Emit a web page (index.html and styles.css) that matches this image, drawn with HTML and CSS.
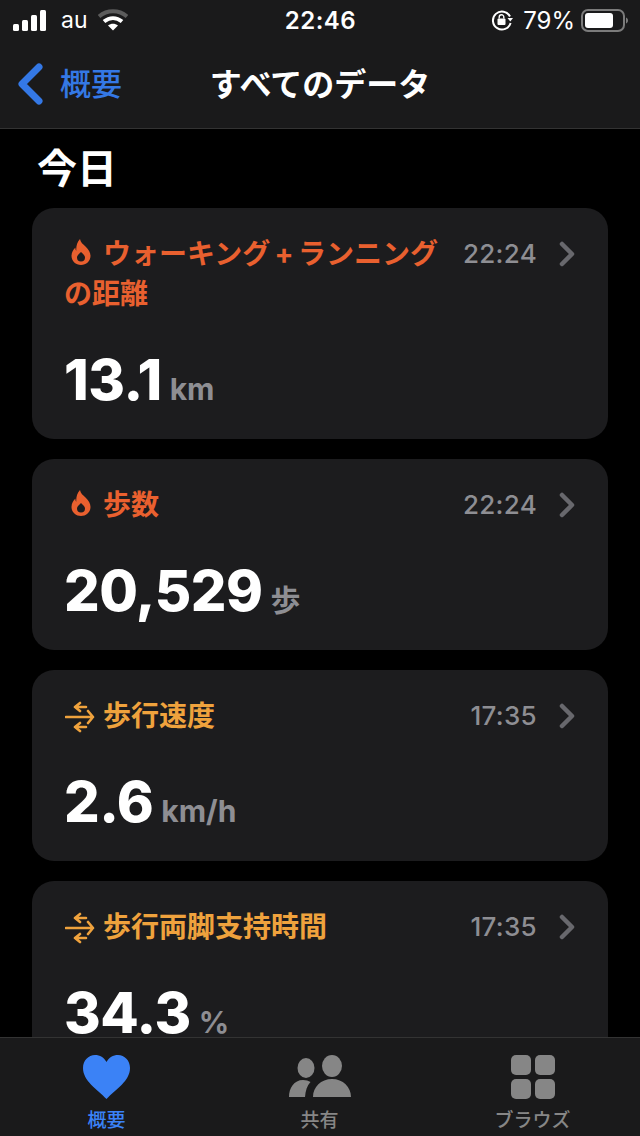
FILE: index.html
```html
<!doctype html>
<html lang="ja">
  <head>
    <meta charset="utf-8">
    <meta name="viewport" content="width=device-width, initial-scale=1">
    <title>すべてのデータ</title>
    <link rel="stylesheet" href="styles.css">
  </head>
  <body>
    <div class="app">
      <header class="top">
        <div class="status">
          <div class="status-left">
            <svg class="signal" width="34" height="21" viewBox="0 0 34 21"><rect x="0" y="14" width="6" height="7" rx="1.500"/><rect x="9" y="10" width="6" height="11" rx="1.500"/><rect x="18" y="5" width="6" height="16" rx="1.500"/><rect x="27" y="0" width="6" height="21" rx="1.500"/></svg>
            <span class="carrier">au</span>
            <svg class="wifi" width="30" height="22" viewBox="0 0 30 22"><path d="M1 7.500C9 .5 21 .5 29 7.500" fill="none" stroke="#5c5c5c" stroke-width="4"/><path d="M6 12.500c5.500-4.500 12.500-4.500 18 0" fill="none" stroke="#fff" stroke-width="4"/><path d="M10 16.500c3-2.400 7-2.400 10 0L15 21.500z" fill="#fff"/></svg>
          </div>
          <span class="clock">22:46</span>
          <div class="status-right">
            <svg class="lock" width="22" height="22" viewBox="0 0 22 22"><path d="M19 7.500A9 9 0 1 0 19.600 14" fill="none" stroke="#fff" stroke-width="2"/><path d="M16.500 9h5.500l-2.700 3.500z" fill="#fff"/><rect x="6.500" y="9.500" width="8" height="6.500" rx="1" fill="#fff"/><path d="M8.200 9.500V8a2.300 2.300 0 0 1 4.600 0v1.500" fill="none" stroke="#fff" stroke-width="1.400"/></svg>
            <span class="percent">79%</span>
            <svg class="battery" width="47" height="23" viewBox="0 0 47 23"><rect x="1" y="1" width="42" height="21" rx="6" fill="none" stroke="#7b7b7b" stroke-width="2"/><rect x="4" y="4" width="28" height="15" rx="3" fill="#fff"/><path d="M45 8.500c1.300.5 2 1.600 2 3s-.7 2.500-2 3z" fill="#7b7b7b"/></svg>
          </div>
        </div>
        <nav class="nav">
          <a class="back">
            <svg width="28" height="42" viewBox="0 0 28 42"><path d="M23 4 6 21l17 17" fill="none" stroke="#3478e5" stroke-width="7" stroke-linecap="round" stroke-linejoin="round"/></svg>
            <span>概要</span>
          </a>
          <h1>すべてのデータ</h1>
        </nav>
      </header>

      <main class="list">
        <h2>今日</h2>

        <section class="card">
          <div class="card-head">
            <h3 class="title red">
              <svg class="flame" width="20" height="26" viewBox="0 0 20 26"><path fill-rule="evenodd" d="M9 0c.5 3.500 3 5 5.500 7.500 3 3 5 6 5 9.500 0 5-4.300 9-9.500 9S.5 22 .5 17c0-4 2-6.500 4-8.500-.2 1.500 0 2.500.8 3.300C5 7.500 6 3 9 0zM10 13c-2 2-4 3.500-4 5.500a4 4 0 0 0 8 0c0-2-2-3.500-4-5.500z"/></svg><span>ウォーキング&#8201;+&#8201;ランニングの距離</span>
            </h3>
            <span class="time">22:24</span>
            <svg class="chevron" width="18" height="26" viewBox="0 0 18 26"><path d="M4 3l10 10L4 23" fill="none" stroke="#68686d" stroke-width="4.500" stroke-linecap="round" stroke-linejoin="round"/></svg>
          </div>
          <p class="value">13.1<small>km</small></p>
        </section>

        <section class="card">
          <div class="card-head">
            <h3 class="title red">
              <svg class="flame" width="20" height="26" viewBox="0 0 20 26"><path fill-rule="evenodd" d="M9 0c.5 3.500 3 5 5.500 7.500 3 3 5 6 5 9.500 0 5-4.300 9-9.500 9S.5 22 .5 17c0-4 2-6.500 4-8.500-.2 1.500 0 2.500.8 3.300C5 7.500 6 3 9 0zM10 13c-2 2-4 3.500-4 5.500a4 4 0 0 0 8 0c0-2-2-3.500-4-5.500z"/></svg><span>歩数</span>
            </h3>
            <span class="time">22:24</span>
            <svg class="chevron" width="18" height="26" viewBox="0 0 18 26"><path d="M4 3l10 10L4 23" fill="none" stroke="#68686d" stroke-width="4.500" stroke-linecap="round" stroke-linejoin="round"/></svg>
          </div>
          <p class="value">20,529<small>歩</small></p>
        </section>

        <section class="card">
          <div class="card-head">
            <h3 class="title orange">
              <svg class="arrows" width="30" height="32" viewBox="0 0 30 32"><path d="M21 6H10M15 2l-5 4 5 4M1 16h27M23 10l5 6-5 6M21 26H10M15 22l-5 4 5 4" fill="none" stroke="currentColor" stroke-width="2.600" stroke-linecap="round" stroke-linejoin="round"/></svg><span>歩行速度</span>
            </h3>
            <span class="time">17:35</span>
            <svg class="chevron" width="18" height="26" viewBox="0 0 18 26"><path d="M4 3l10 10L4 23" fill="none" stroke="#68686d" stroke-width="4.500" stroke-linecap="round" stroke-linejoin="round"/></svg>
          </div>
          <p class="value">2.6<small>km/h</small></p>
        </section>

        <section class="card">
          <div class="card-head">
            <h3 class="title orange">
              <svg class="arrows" width="30" height="32" viewBox="0 0 30 32"><path d="M21 6H10M15 2l-5 4 5 4M1 16h27M23 10l5 6-5 6M21 26H10M15 22l-5 4 5 4" fill="none" stroke="currentColor" stroke-width="2.600" stroke-linecap="round" stroke-linejoin="round"/></svg><span>歩行両脚支持時間</span>
            </h3>
            <span class="time">17:35</span>
            <svg class="chevron" width="18" height="26" viewBox="0 0 18 26"><path d="M4 3l10 10L4 23" fill="none" stroke="#68686d" stroke-width="4.500" stroke-linecap="round" stroke-linejoin="round"/></svg>
          </div>
          <p class="value">34.3<small>%</small></p>
        </section>
      </main>

      <footer class="tabs">
        <a class="tab active">
          <svg width="47" height="44" viewBox="0 0 47 44"><path d="M23.500 44C14 34 0 26 0 13 0 5.500 5.500 0 12 0c5 0 9 2.500 11.500 7C26 2.500 30 0 35 0c6.500 0 12 5.500 12 13 0 13-14 21-23.500 31z" fill="#3b82f6"/></svg>
          <span>概要</span>
        </a>
        <a class="tab">
          <svg width="62" height="44" viewBox="0 0 62 44" fill="#868686"><ellipse cx="17" cy="13" rx="8.500" ry="10"/><ellipse cx="43" cy="11" rx="10" ry="11"/><path d="M0 42c0-9 5-17 14-17 3 0 5.500.7 7.500 2-3.500 3.500-5 9-5.500 15zM24 42c0-10 8-18 19-18s19 8 19 18z"/></svg>
          <span>共有</span>
        </a>
        <a class="tab">
          <svg width="44" height="44" viewBox="0 0 44 44" fill="#868686"><rect width="20" height="20" rx="5"/><rect x="24" width="20" height="20" rx="5"/><rect y="24" width="20" height="20" rx="5"/><rect x="24" y="24" width="20" height="20" rx="5"/></svg>
          <span>ブラウズ</span>
        </a>
      </footer>
    </div>
  </body>
</html>
```

FILE: styles.css
```css
* {
  box-sizing: border-box;
}

body {
  margin: 0;
  background-color: #000;
  color: #fff;
  font-family: "Inter", "Noto Sans CJK JP", sans-serif;
}

h1, h2, h3, p {
  margin: 0;
}

.app {
  display: flex;
  flex-direction: column;
  height: 1136px;
  overflow: hidden;
}

/* top bar */
.top {
  flex: none;
  height: 129px;
  background-color: #1a1a1b;
  border-bottom: 1px solid #333;
}

.status {
  display: grid;
  grid-template-columns: 1fr auto 1fr;
  align-items: center;
  height: 40px;
  padding: 0 12px 0 13px;
}

.status-left, .status-right {
  display: flex;
  align-items: center;
}

.status-right {
  justify-content: flex-end;
}

.signal {
  fill: #fff;
  margin-right: 14px;
}

.carrier {
  font-size: 23px;
  margin-right: 10px;
}

.clock {
  font-size: 24px;
  font-weight: 600;
  letter-spacing: 0.5px;
}

.lock {
  margin-right: 10px;
}

.percent {
  font-size: 24px;
  margin-right: 6px;
}

.nav {
  display: flex;
  justify-content: center;
  align-items: center;
  height: 88px;
  padding-bottom: 4px;
  position: relative;
}

.back {
  position: absolute;
  left: 16px;
  top: 23px;
  display: flex;
  align-items: center;
  gap: 16px;
  color: #3478e5;
  font-size: 31px;
  line-height: 42px;
  font-weight: 500;
}

.nav h1 {
  font-size: 32px;
  font-weight: 700;
}

/* scrolling list */
.list {
  flex: 1;
  min-height: 0;
  overflow: hidden;
  padding: 0 32px;
}

.list h2 {
  height: 79px;
  padding: 15px 0 0 5px;
  font-size: 40px;
  line-height: 50px;
  font-weight: 700;
}

.card {
  margin-bottom: 20px;
  padding: 26px 32px 25px 32px;
  background-color: #1c1c1e;
  border-radius: 22px;
}

.card-head {
  display: flex;
  align-items: flex-start;
}

.title {
  flex: 1;
  font-size: 28px;
  line-height: 40px;
  font-weight: 700;
}

.title svg {
  vertical-align: -1px;
}

.title span {
  margin-left: 12px;
}

.red {
  color: #e9602f;
}

.red svg {
  fill: currentColor;
  margin-left: 7px;
}

.orange {
  color: #efa23d;
}

.orange svg {
  margin-left: 1px;
  vertical-align: -7px;
}

.orange span {
  margin-left: 8px;
}

.time {
  margin: 0 21px 0 22px;
  color: #8e8e93;
  font-size: 26px;
  line-height: 40px;
  font-weight: 500;
  letter-spacing: 0.3px;
  white-space: nowrap;
}

.chevron {
  flex: none;
  margin: 7px 0 0 0;
}

.value {
  margin-top: 32px;
  font-size: 56px;
  line-height: 68px;
  font-weight: 800;
  letter-spacing: -0.5px;
  white-space: nowrap;
}

.value small {
  margin-left: 8px;
  color: #8e8e93;
  font-size: 30px;
  line-height: 1;
  font-weight: 700;
  letter-spacing: 0;
}

/* tab bar */
.tabs {
  flex: none;
  display: flex;
  height: 99px;
  padding: 17px 0 0 0;
  background-color: #1a1a1b;
  border-top: 1px solid #333;
}

.tab {
  width: 213px;
  display: flex;
  flex-direction: column;
  align-items: center;
  gap: 9px;
  color: #868686;
  font-size: 19px;
  line-height: 26px;
  font-weight: 500;
}

.tab.active {
  color: #3b82f6;
}
```
